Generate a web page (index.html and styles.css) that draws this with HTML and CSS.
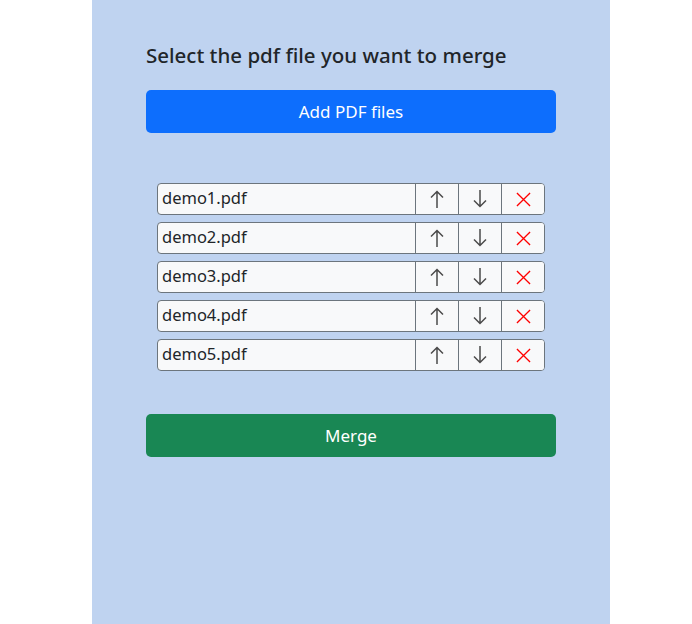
FILE: index.html
```html
<!DOCTYPE html>
<html>
<head>
<meta charset="utf-8">
<link rel="stylesheet" href="styles.css">
</head>
<body>
<main class="panel">
  <h1 class="title">Select the pdf file you want to merge</h1>
  <button class="btn btn-add">Add PDF files</button>
  <ul class="files">
    <li class="file-row"><span class="file-name">demo1.pdf</span><button class="act"><svg class="ico" viewBox="0 0 14 18" width="14" height="18"><path d="M7 1.5V18M1 7.5L7 1.5L13 7.5" /></svg></button><button class="act"><svg class="ico" viewBox="0 0 14 18" width="14" height="18"><path d="M7 0V16.5M1 10.5L7 16.5L13 10.5" /></svg></button><button class="act"><svg class="ico del" viewBox="0 0 16 16" width="16" height="16"><path d="M1 1L15 15M15 1L1 15" /></svg></button></li>
    <li class="file-row"><span class="file-name">demo2.pdf</span><button class="act"><svg class="ico" viewBox="0 0 14 18" width="14" height="18"><path d="M7 1.5V18M1 7.5L7 1.5L13 7.5" /></svg></button><button class="act"><svg class="ico" viewBox="0 0 14 18" width="14" height="18"><path d="M7 0V16.5M1 10.5L7 16.5L13 10.5" /></svg></button><button class="act"><svg class="ico del" viewBox="0 0 16 16" width="16" height="16"><path d="M1 1L15 15M15 1L1 15" /></svg></button></li>
    <li class="file-row"><span class="file-name">demo3.pdf</span><button class="act"><svg class="ico" viewBox="0 0 14 18" width="14" height="18"><path d="M7 1.5V18M1 7.5L7 1.5L13 7.5" /></svg></button><button class="act"><svg class="ico" viewBox="0 0 14 18" width="14" height="18"><path d="M7 0V16.5M1 10.5L7 16.5L13 10.5" /></svg></button><button class="act"><svg class="ico del" viewBox="0 0 16 16" width="16" height="16"><path d="M1 1L15 15M15 1L1 15" /></svg></button></li>
    <li class="file-row"><span class="file-name">demo4.pdf</span><button class="act"><svg class="ico" viewBox="0 0 14 18" width="14" height="18"><path d="M7 1.5V18M1 7.5L7 1.5L13 7.5" /></svg></button><button class="act"><svg class="ico" viewBox="0 0 14 18" width="14" height="18"><path d="M7 0V16.5M1 10.5L7 16.5L13 10.5" /></svg></button><button class="act"><svg class="ico del" viewBox="0 0 16 16" width="16" height="16"><path d="M1 1L15 15M15 1L1 15" /></svg></button></li>
    <li class="file-row"><span class="file-name">demo5.pdf</span><button class="act"><svg class="ico" viewBox="0 0 14 18" width="14" height="18"><path d="M7 1.5V18M1 7.5L7 1.5L13 7.5" /></svg></button><button class="act"><svg class="ico" viewBox="0 0 14 18" width="14" height="18"><path d="M7 0V16.5M1 10.5L7 16.5L13 10.5" /></svg></button><button class="act"><svg class="ico del" viewBox="0 0 16 16" width="16" height="16"><path d="M1 1L15 15M15 1L1 15" /></svg></button></li>
  </ul>
  <button class="btn btn-merge">Merge</button>
</main>
</body>
</html>
```
FILE: styles.css
```css
html, body {
  margin: 0;
  padding: 0;
  background: #ffffff;
  font-family: "Noto Sans", "Open Sans", sans-serif;
  color: #212529;
}
.panel {
  box-sizing: border-box;
  width: 518px;
  min-height: 624px;
  margin-left: 92px;
  background: #bfd3f0;
  padding: 40px 54px 0 54px;
  display: flex;
  flex-direction: column;
}
.title {
  margin: 0;
  font-size: 20.5px;
  font-weight: 500;
  line-height: 30px;
  color: #212529;
}
.btn {
  border: none;
  border-radius: 5px;
  height: 43px;
  width: 410px;
  color: #ffffff;
  font-family: inherit;
  font-size: 17px;
  padding: 0;
  cursor: pointer;
}
.btn-add {
  margin-top: 20px;
  background: #0d6efd;
}
.btn-merge {
  margin-top: 43px;
  background: #198754;
}
.files {
  list-style: none;
  margin: 50px 0 0 11px;
  padding: 0;
  width: 388px;
  display: flex;
  flex-direction: column;
  gap: 7px;
}
.file-row {
  display: flex;
  height: 32px;
  box-sizing: border-box;
  border: 1px solid #6c757d;
  border-radius: 4px;
  background: #f8f9fa;
  overflow: hidden;
}
.file-name {
  flex: 1;
  font-size: 16.5px;
  line-height: 28px;
  padding-left: 4px;
  color: #212529;
}
.act {
  width: 43px;
  border: none;
  border-left: 1px solid #6c757d;
  background: #f8f9fa;
  padding: 0;
  display: flex;
  align-items: center;
  justify-content: center;
}
.ico {
  fill: none;
  stroke: #4a4a4a;
  stroke-width: 1.5;
}
.ico.del {
  stroke: #ff0000;
  stroke-width: 1.4;
  width: 15px;
  height: 15px;
}
```
